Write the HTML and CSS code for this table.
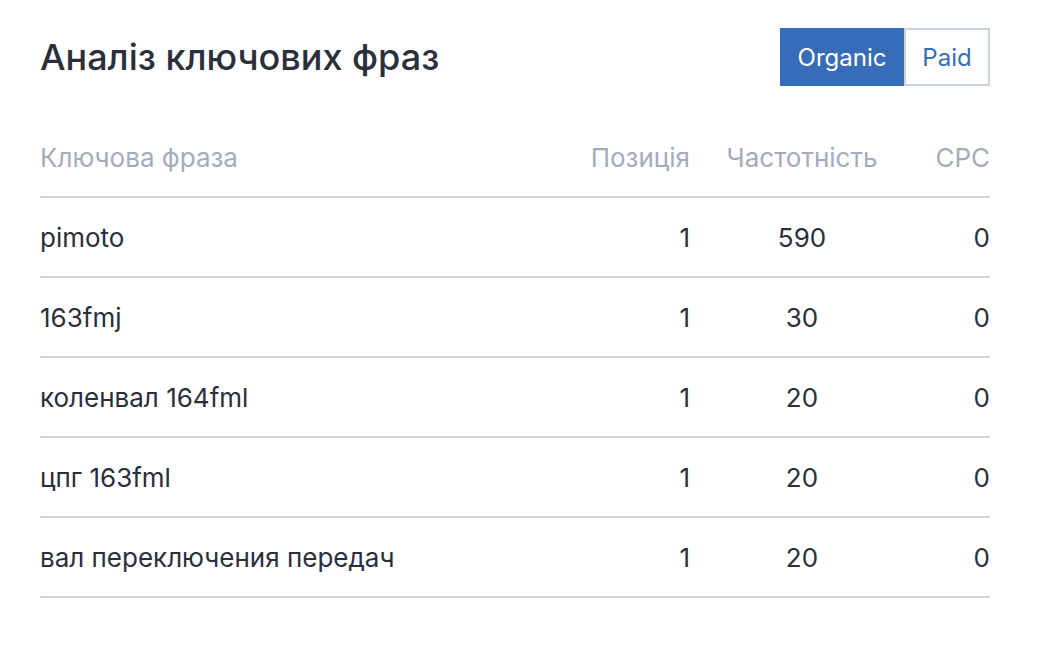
FILE: index.html
```html
<!DOCTYPE html>
<html lang="uk">
  <head>
    <meta charset="UTF-8" />
    <meta name="viewport" content="width=device-width, initial-scale=1.0" />
    <title>Аналіз ключових фраз</title>
    <link rel="stylesheet" href="styles.css">
  </head>
  <body>
    <main class="panel">
      <header class="panel-head">
        <h1>Аналіз ключових фраз</h1>
        <div class="switch">
          <button class="active">Organic</button>
          <button>Paid</button>
        </div>
      </header>
      <div class="grid">
        <div class="row head">
          <div>Ключова фраза</div>
          <div class="num">Позиція</div>
          <div class="mid">Частотність</div>
          <div class="num">CPC</div>
        </div>
        <div class="row">
          <div>pimoto</div>
          <div class="num">1</div>
          <div class="mid">590</div>
          <div class="num">0</div>
        </div>
        <div class="row">
          <div>163fmj</div>
          <div class="num">1</div>
          <div class="mid">30</div>
          <div class="num">0</div>
        </div>
        <div class="row">
          <div>коленвал 164fml</div>
          <div class="num">1</div>
          <div class="mid">20</div>
          <div class="num">0</div>
        </div>
        <div class="row">
          <div>цпг 163fml</div>
          <div class="num">1</div>
          <div class="mid">20</div>
          <div class="num">0</div>
        </div>
        <div class="row">
          <div>вал переключения передач</div>
          <div class="num">1</div>
          <div class="mid">20</div>
          <div class="num">0</div>
        </div>
      </div>
    </main>
  </body>
</html>
```

FILE: styles.css
```css
* {
  box-sizing: border-box;
}
body {
  margin: 0;
  background: #fff;
  color: #2b2e3b;
  font-family: Inter, "Noto Sans", sans-serif;
}
.panel {
  width: 950px;
  margin-left: 40px;
  padding-top: 28px;
}
.panel-head {
  display: flex;
  justify-content: space-between;
  align-items: center;
  height: 58px;
}
h1 {
  margin: 0;
  font-size: 36px;
  font-weight: 500;
}
.switch {
  display: flex;
  height: 58px;
}
.switch button {
  font-family: inherit;
  font-size: 24px;
  border: 2px solid #ccd3e0;
  background: #fff;
  color: #376db8;
  width: 86px;
  padding: 0;
  cursor: pointer;
}
.switch button.active {
  background: #376db8;
  border-color: #376db8;
  color: #fff;
  width: 124px;
}
.grid {
  margin-top: 32px;
}
.row {
  display: grid;
  grid-template-columns: 520px 130px 224px 76px;
  align-items: center;
  height: 80px;
  font-size: 26px;
  border-bottom: 2px solid #cdd3df;
}
.row.head {
  color: #a3abbe;
}
.num {
  text-align: right;
}
.mid {
  text-align: center;
}
```
